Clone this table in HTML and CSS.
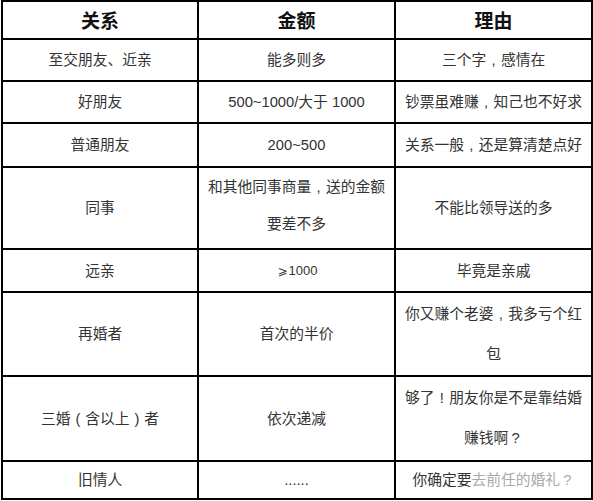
FILE: index.html
```html
<!DOCTYPE html>
<html lang="zh-CN">
<head>
<meta charset="utf-8">
<title>份子钱</title>
<link rel="stylesheet" href="styles.css">
</head>
<body>
<div class="sheet">
  <div class="cell head">关系</div>
  <div class="cell head">金额</div>
  <div class="cell head">理由</div>

  <div class="cell">至交朋友、近亲</div>
  <div class="cell">能多则多</div>
  <div class="cell">三个字<span class="p">,</span>感情在</div>

  <div class="cell">好朋友</div>
  <div class="cell">500~1000/大于 1000</div>
  <div class="cell">钞票虽难赚<span class="p">,</span>知己也不好求</div>

  <div class="cell">普通朋友</div>
  <div class="cell">200~500</div>
  <div class="cell">关系一般<span class="p">,</span>还是算清楚点好</div>

  <div class="cell">同事</div>
  <div class="cell lh37">和其他同事商量<span class="p">,</span>送的金额<br>要差不多</div>
  <div class="cell">不能比领导送的多</div>

  <div class="cell">远亲</div>
  <div class="cell small"><span class="math">⩾</span>1000</div>
  <div class="cell">毕竟是亲戚</div>

  <div class="cell">再婚者</div>
  <div class="cell">首次的半价</div>
  <div class="cell lh40">你又赚个老婆<span class="p">,</span>我多亏个红<br>包</div>

  <div class="cell">三婚<span class="p">(</span>含以上<span class="p">)</span>者</div>
  <div class="cell">依次递减</div>
  <div class="cell lh42">够了<span class="p">!</span>朋友你是不是靠结婚<br>赚钱啊<span class="p">?</span></div>

  <div class="cell">旧情人</div>
  <div class="cell">......</div>
  <div class="cell">你确定要<span class="mark">去前任的婚礼<span class="p">?</span></span></div>
</div>
</body>
</html>
```

FILE: styles.css
```css
html, body {
  margin: 0;
  padding: 0;
  background: #ffffff;
}

body {
  width: 593px;
  height: 501px;
  overflow: hidden;
}

.sheet {
  margin-left: 1px;
  width: 592px;
  box-sizing: border-box;
  display: grid;
  grid-template-columns: 194px 195px 195px;
  grid-template-rows: 36px 40px 40px 42px 80px 41px 82px 83px 36px;
  gap: 2px;
  padding: 2px 2px 2px 2px;
  background: #000000;
}

.cell {
  background: #ffffff;
  display: flex;
  align-items: center;
  justify-content: center;
  text-align: center;
  font-family: "Liberation Sans", "Noto Sans CJK SC", sans-serif;
  font-size: 14.75px;
  line-height: 20px;
  color: #333333;
  white-space: nowrap;
  overflow: hidden;
}

.cell.lh37,
.cell.lh40,
.cell.lh42 {
  display: block;
  padding-top: 1px;
}

.cell.lh37 { line-height: 37px; }
.cell.lh40 { line-height: 40px; }
.cell.lh42 { line-height: 40px; }

.head {
  font-family: "Noto Sans CJK SC", sans-serif;
  font-weight: 700;
  font-size: 19px;
  color: #111111;
}

.p {
  display: inline-block;
  width: 1em;
  text-align: center;
  font-family: "Liberation Sans", sans-serif;
}

.small {
  font-size: 13px;
  padding-left: 2px;
}

.math {
  font-family: "DejaVu Sans", sans-serif;
  font-size: 12px;
  margin-right: 1px;
}

.mark {
  color: #a9a9a9;
  text-shadow: 0 0 1px #ffffff, 0 0 2px #ffffff;
}
```
